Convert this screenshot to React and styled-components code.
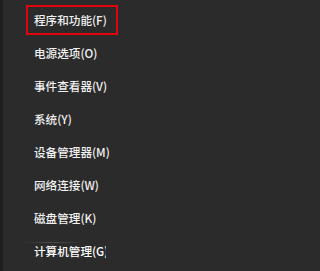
import React from "react";
import styled, { createGlobalStyle } from "styled-components";

const Global = createGlobalStyle`
  html, body { margin: 0; padding: 0; background: #2b2b2b; }
  body { width: 211px; height: 271px; overflow: hidden; }
`;

const Menu = styled.div`
  width: 211px;
  height: 271px;
  box-sizing: border-box;
  background: #2b2b2b;
  border-left: 3px solid #1e1e1e;
  padding-top: 3px;
  display: flex;
  flex-direction: column;
  font-family: "Noto Sans CJK SC", "Noto Sans", sans-serif;
  overflow: hidden;
  position: relative;
`;

const Item = styled.div`
  height: 33px;
  display: flex;
  align-items: center;
  padding-left: 23px;
  flex-shrink: 0;
`;

const Label = styled.div`
  box-sizing: border-box;
  height: 30px;
  display: flex;
  align-items: center;
  padding-left: ${(p) => (p.$active ? 6 : 8)}px;
  width: ${(p) => (p.$clip ? "80px" : "auto")};
  min-width: ${(p) => (p.$active ? "92px" : "0")};
  border: ${(p) => (p.$active ? "2px solid #e3000f" : "none")};
  color: ${(p) => (p.$clip ? "#ffffff" : "#f0f0f0")};
  font-size: 11.6px;
  font-weight: 500;
  white-space: nowrap;
  overflow: hidden;
`;

const Streak = styled.div`
  position: absolute;
  left: 20px;
  top: 242px;
  width: 60px;
  height: 1px;
  background: linear-gradient(90deg, rgba(80,80,80,0), rgba(80,80,80,0.9), rgba(80,80,80,0));
`;

const items = [
  { text: "程序和功能(F)", active: true },
  { text: "电源选项(O)" },
  { text: "事件查看器(V)" },
  { text: "系统(Y)" },
  { text: "设备管理器(M)" },
  { text: "网络连接(W)" },
  { text: "磁盘管理(K)" },
  { text: "计算机管理(G)", clip: true },
];

export default function App() {
  return (
    <>
      <Global />
      <Menu>
        {items.map((it) => (
          <Item key={it.text}>
            <Label $active={it.active} $clip={it.clip}>
              {it.text}
            </Label>
          </Item>
        ))}
        <Streak />
      </Menu>
    </>
  );
}
